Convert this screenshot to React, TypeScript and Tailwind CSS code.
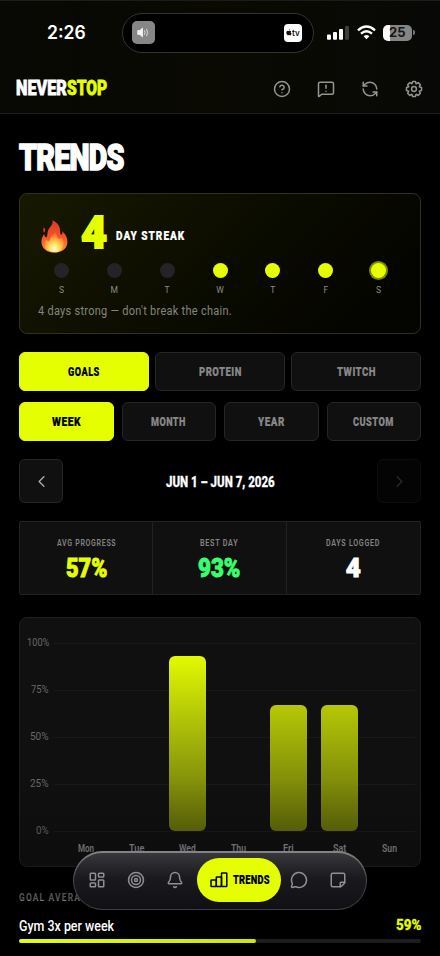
import React, { useLayoutEffect, useRef, useState } from 'react';
import {
  Bell,
  ChevronLeft,
  ChevronRight,
  CircleHelp,
  LayoutDashboard,
  MessageCircle,
  MessageSquareWarning,
  RefreshCcw,
  StickyNote,
  Target,
} from 'lucide-react';

interface FitProps {
  className: string;
  children: React.ReactNode;
}

// Condensed lettering: squeezes the text to the width of its box
const Fit: React.FC<FitProps> = ({ className, children }) => {
  const box = useRef<HTMLSpanElement>(null);
  const text = useRef<HTMLSpanElement>(null);
  const [scale, setScale] = useState<number>(1);

  useLayoutEffect(() => {
    if (box.current && text.current) {
      setScale(box.current.clientWidth / text.current.offsetWidth);
    }
  }, []);

  return (
    <span ref={box} className={`block shrink-0 whitespace-nowrap leading-none ${className}`}>
      <span ref={text} className="inline-block origin-left" style={{ transform: `scaleX(${scale})` }}>
        {children}
      </span>
    </span>
  );
};

const days = [
  { label: 'S', done: false },
  { label: 'M', done: false },
  { label: 'T', done: false },
  { label: 'W', done: true },
  { label: 'T', done: true },
  { label: 'F', done: true },
  { label: 'S', done: true, today: true },
];

const metrics = [
  { label: 'GOALS', width: 'w-[32px]', active: true },
  { label: 'PROTEIN', width: 'w-[43px]' },
  { label: 'TWITCH', width: 'w-[39px]' },
];

const ranges = [
  { label: 'WEEK', width: 'w-[29px]', active: true },
  { label: 'MONTH', width: 'w-[35px]' },
  { label: 'YEAR', width: 'w-[27px]' },
  { label: 'CUSTOM', width: 'w-[41px]' },
];

const stats = [
  { label: 'AVG PROGRESS', labelWidth: 'w-[59px]', value: '57%', valueWidth: 'w-[41px]', color: 'text-[#e6ff00]' },
  { label: 'BEST DAY', labelWidth: 'w-[38px]', value: '93%', valueWidth: 'w-[42px]', color: 'text-[#39ff6e]' },
  { label: 'DAYS LOGGED', labelWidth: 'w-[54px]', value: '4', valueWidth: 'w-[15px]', color: 'text-white' },
];

const bars = [
  { day: 'Mon', value: 0, width: 'w-[16px]' },
  { day: 'Tue', value: 0, width: 'w-[15px]' },
  { day: 'Wed', value: 93, width: 'w-[17px]' },
  { day: 'Thu', value: 0, width: 'w-[15px]' },
  { day: 'Fri', value: 67, width: 'w-[11px]' },
  { day: 'Sat', value: 67, width: 'w-[13px]' },
  { day: 'Sun', value: 0, width: 'w-[15px]' },
];

const ticks = [
  { label: '100%', width: 'w-[22px]' },
  { label: '75%', width: 'w-[18px]' },
  { label: '50%', width: 'w-[19px]' },
  { label: '25%', width: 'w-[19px]' },
  { label: '0%', width: 'w-[13px]' },
];

const StatusBar = () => (
  <div className="flex h-[65px] items-center pb-[2px]">
    <div className="w-[122px] pl-[47px]">
      <Fit className="w-[39px] font-['Inter'] text-[18px] font-semibold">2:26</Fit>
    </div>
    <div className="flex h-[40px] w-[192px] items-center justify-between rounded-full border border-[#333331] bg-black pr-[11px] pl-[9px]">
      <div className="flex size-[23px] items-center justify-center rounded-[5px] bg-[#868686]">
        <svg width="13" height="11" viewBox="0 0 13 11" fill="none">
          <path d="M0.8 3.600h2l2.600-2.400v8.600L2.800 7.400h-2z" fill="#f2f2f2" stroke="#f2f2f2" strokeLinejoin="round" />
          <path d="M7.600 3.700q1 1.800 0 3.600M9.700 2.200q2 3.300 0 6.600" stroke="#dcdcdc" strokeLinecap="round" />
        </svg>
      </div>
      <div className="flex size-[18px] items-center justify-center gap-[0.5px] rounded-[4px] bg-white">
        <svg width="6" height="7" viewBox="0 0 6 7" fill="#111">
          <path d="M4.100 0q.1 1-1 1.500Q3 .5 4.100 0ZM5.300 2.300q-1.300 1.200.3 2.200Q4.800 6.800 3.900 6.300q-.8-.4-1.600 0Q1.200 6.700.4 4.600-.2 1.800 1.900 1.700q1.200.4 1.900 0 1-.1 1.500.6Z" />
        </svg>
        <Fit className="w-[8px] font-['Inter'] text-[9px] font-semibold text-[#111]">tv</Fit>
      </div>
    </div>
    <div className="flex items-center pl-[13px]">
      <svg width="22" height="15" viewBox="0 0 22 15" fill="#fff">
        <rect x="0" y="9.500" width="4" height="5.200" rx="1" />
        <rect x="6" y="7" width="4" height="7.700" rx="1" />
        <rect x="12" y="4" width="4" height="10.700" rx="1" />
        <rect x="18" y="1" width="4" height="13.700" rx="1" fill="#3e3e3c" />
      </svg>
      <svg className="ml-[8px]" width="19" height="15" viewBox="0 0 19 15" fill="none" stroke="#fff" strokeWidth="2.400">
        <path d="M1 5.400Q9.500-2.300 18 5.400M4 8.700q5.500-4.800 11 0" />
        <path d="M9.500 14.200 6.600 11.200q2.900-2.300 5.800 0Z" fill="#fff" stroke="none" />
      </svg>
      <div className="ml-[7px] flex h-[16px] w-[29px] items-center justify-center rounded-[5px] bg-linear-to-r from-white from-25% to-[#858585] to-25%">
        <Fit className="w-[17px] font-['Inter'] text-[13px] font-bold text-[#161616]">25</Fit>
      </div>
      <div className="ml-px h-[5px] w-[1.500px] rounded-r-full bg-[#777]" />
    </div>
  </div>
);

const GearIcon = () => (
  <svg width="18" height="18" viewBox="0 0 24 24" fill="none" stroke="currentColor" strokeWidth="2" strokeLinejoin="round">
    <path d="M10.100 2h3.800l.9 3 2.800-1.500 2.900 2.900L19 9.200l3 .9v3.800l-3 .9 1.500 2.800-2.900 2.900-2.800-1.500-.9 3h-3.800l-.9-3-2.800 1.500-2.900-2.900L5 14.800l-3-.9v-3.800l3-.9-1.500-2.800 2.900-2.900L9.200 5z" />
    <circle cx="12" cy="12" r="3.200" />
  </svg>
);

const PodiumIcon = () => (
  <svg width="18" height="18" viewBox="0 0 18 18" fill="none" stroke="currentColor" strokeWidth="1.500" strokeLinejoin="round">
    <rect x="1" y="9" width="5.300" height="6.500" rx="0.600" />
    <rect x="6.300" y="6" width="5.200" height="9.500" rx="0.600" />
    <rect x="11.500" y="2" width="5.300" height="13.500" rx="0.600" />
  </svg>
);

const Flame = () => (
  <svg width="27" height="33" viewBox="0 0 27 33">
    <defs>
      <linearGradient id="outer" x1="0" y1="0" x2="0" y2="1">
        <stop offset="0" stopColor="#d93a22" />
        <stop offset="0.500" stopColor="#f4502b" />
        <stop offset="1" stopColor="#ff9a2c" />
      </linearGradient>
      <radialGradient id="inner" cx="0.500" cy="0.850" r="0.750">
        <stop offset="0" stopColor="#fffbd8" />
        <stop offset="0.350" stopColor="#ffdf5a" />
        <stop offset="0.700" stopColor="#ff9a35" />
        <stop offset="1" stopColor="#f4562b" />
      </radialGradient>
    </defs>
    <path
      fill="url(#outer)"
      d="M11.500 0.300C16.500 2.500 19.300 6.500 19.200 12c0 1.600.5 2.600 1.200 2.600 1 0 1.300-1.500.8-3.300 3.400 2.600 5.300 6.300 5.200 10.700C26.300 28.500 21 32.600 13.400 32.600 5.700 32.600.4 28.300.5 21.500c0-3.200 1.100-5.500 2.700-7.600.1 2 .8 3.200 1.800 3.400 1.500 0 1.200-2.600 1.600-5 .6-3.600 2.500-4.800 4-7.200 1-1.700 1.300-3.200.9-4.800Z"
    />
    <path
      fill="url(#inner)"
      d="M14.500 10.500c1.500 3.500 1 5.500 2.500 7.500 1.200 1.500 2.700.8 3.200-.6 2 1.800 3 4 2.500 7-.7 5-4.500 7.800-9.300 7.800S4.300 29.500 3.800 25c-.3-2.600.5-4.300 1.700-5.700.4 1.700 1.500 2.300 2.600 1.800 1.700-1 .6-3.300 2.500-5.500 1.700-1.800 3.500-2.600 3.900-5.100Z"
    />
    <path fill="#e63d20" d="M2.600 7.500c2 1.300 2 3.500.3 5.300-.8-1.900-.6-3.600-.3-5.300Z" />
  </svg>
);

interface PillProps {
  label: string;
  width: string;
  active?: boolean;
}

const Pill: React.FC<PillProps> = ({ label, width, active }) => (
  <button
    className={`flex h-[39px] flex-1 items-center justify-center rounded-[6px] border ${
      active ? 'border-[#e6ff00] bg-[#e6ff00] text-black' : 'border-[#262626] bg-[#101010] text-[#888]'
    }`}
  >
    <Fit className={`text-[13.500px] font-black tracking-wider [-webkit-text-stroke:0.2px] ${width}`}>{label}</Fit>
  </button>
);

const StreakCard = () => (
  <section className="mt-[20px] h-[141px] rounded-[8px] border border-[#303409] bg-linear-135 from-[#171900] to-[#030300] px-[18px]">
    <div className="flex h-[69px] items-end">
      <div className="w-[43px] pb-[10px] pl-[3px]">
        <Flame />
      </div>
      <Fit className="mb-[8px] w-[26px] text-[45px] font-black text-[#e6ff00] [-webkit-text-stroke:1.800px]">4</Fit>
      <Fit className="mb-[21px] ml-[9px] w-[69px] text-[13.500px] font-black tracking-widest [-webkit-text-stroke:0.2px]">
        DAY STREAK
      </Fit>
    </div>
    <div className="flex gap-[6px]">
      {days.map((day, i) => (
        <div key={i} className="flex flex-1 flex-col items-center gap-[7px]">
          <div
            className={`size-[15px] rounded-full ${day.done ? 'bg-[#e6ff00]' : 'bg-[#252326]'} ${
              day.today ? 'ring-2 ring-[#7c8a08]' : ''
            }`}
          />
          <span className="text-[8.500px] leading-[11px] text-[#8c8c86]">{day.label}</span>
        </div>
      ))}
    </div>
    <Fit className="mt-[9px] w-[194px] text-[12.500px] tracking-wide text-[#85857f]">
      4 days strong — don't break the chain.
    </Fit>
  </section>
);

const Chart = () => (
  <section className="mt-[22px] h-[250px] rounded-[8px] border border-[#202020] bg-[#101010] pt-[25px] pr-[5px]">
    <div className="grid">
      <div className="col-start-1 row-start-1 flex flex-col">
        {ticks.map((tick) => (
          <div key={tick.label} className="-mt-[6px] mb-[41px] flex h-[12px] items-center">
            <div className="flex w-[29px] justify-end text-[#686868]">
              <Fit className={`text-[10.500px] ${tick.width}`}>{tick.label}</Fit>
            </div>
            <div className="ml-[5px] h-px flex-1 bg-[#191919]" />
          </div>
        ))}
      </div>
      <div className="col-start-1 row-start-1 ml-[41px] flex">
        {bars.map((bar) => (
          <div key={bar.day} className="flex flex-1 flex-col items-center">
            <div className="flex h-[188px] items-end">
              <div
                className={`w-[37px] rounded-[6px] ${
                  bar.value > 80
                    ? 'bg-linear-to-b from-[#e2fa00] to-[#626b09]'
                    : 'bg-linear-to-b from-[#b6c805] to-[#626b09]'
                }`}
                style={{ height: `${bar.value}%` }}
              />
            </div>
            <Fit className={`mt-[12px] text-[11px] font-semibold text-[#858585] ${bar.width}`}>{bar.day}</Fit>
          </div>
        ))}
      </div>
    </div>
  </section>
);

const TabBar = () => (
  <nav className="absolute top-[851px] left-[73px] h-[59px] w-[294px] rounded-full bg-linear-to-b from-[#858588] via-[#4c4c50] to-[#3e3e42] p-px pt-[1.500px]">
    <div className="flex h-full items-center rounded-full bg-linear-to-b from-[#38383c] via-[#1a1a1e] via-45% to-[#101015] pb-[2px] text-[#909094]">
      <div className="flex w-[123px] items-center gap-[21px] pl-[14px]">
        <LayoutDashboard size={18} strokeLinejoin="miter" />
        <Target size={18} />
        <Bell size={18} />
      </div>
      <div className="flex h-[44px] w-[84px] items-center gap-[5px] rounded-full bg-[#e6ff00] pl-[13px] text-black">
        <PodiumIcon />
        <Fit className="w-[37px] text-[12.500px] font-black tracking-wide [-webkit-text-stroke:0.2px]">TRENDS</Fit>
      </div>
      <div className="flex items-center gap-[21px] pl-[9px]">
        <MessageCircle size={18} />
        <StickyNote size={18} className="-scale-y-100" />
      </div>
    </div>
  </nav>
);

export default function App() {
  return (
    <div className="relative h-[956px] w-[440px] overflow-hidden bg-black font-['Roboto',sans-serif] text-white">
      <header className="h-[114px] border-t border-b border-t-[#1c1c1a] border-b-[#1d1d1b] bg-linear-to-r from-[#080804] via-[#0a0a03] to-[#080806]">
        <StatusBar />
        <div className="flex h-[46px] items-center justify-between pb-px pr-[17px] pl-[16px]">
          <div className="flex text-[21px] font-black [-webkit-text-stroke:0.8px]">
            <Fit className="w-[51px]">NEVER</Fit>
            <Fit className="w-[40px] text-[#e6ff00]">STOP</Fit>
          </div>
          <div className="flex gap-[26px] text-[#949492]">
            <CircleHelp size={18} />
            <MessageSquareWarning size={18} />
            <RefreshCcw size={18} />
            <GearIcon />
          </div>
        </div>
      </header>

      <main className="px-[19px] pt-[25px]">
        <h1>
          <Fit className="h-[34px] w-[105px] text-[37px] font-black tracking-tight [-webkit-text-stroke:1.600px]">
            TRENDS
          </Fit>
        </h1>

        <StreakCard />

        <div className="mt-[18px] flex gap-[6px]">
          {metrics.map((item) => (
            <Pill key={item.label} {...item} />
          ))}
        </div>
        <div className="mt-[11px] flex gap-[8px]">
          {ranges.map((item) => (
            <Pill key={item.label} {...item} />
          ))}
        </div>

        {/* Period navigation */}
        <div className="mt-[18px] flex items-center justify-between">
          <button className="flex size-[44px] items-center justify-center rounded-[6px] border border-[#262626] bg-[#101010] text-[#aaa]">
            <ChevronLeft size={19} strokeWidth={1.8} />
          </button>
          <Fit className="mt-[3px] w-[109px] text-[15px] font-extrabold [-webkit-text-stroke:0.3px]">
            JUN 1 – JUN 7, 2026
          </Fit>
          <button className="flex size-[44px] items-center justify-center rounded-[6px] border border-[#0c0c0c] bg-[#040404] text-[#292929]">
            <ChevronRight size={19} strokeWidth={1.8} />
          </button>
        </div>

        <div className="mt-[18px] grid h-[74px] grid-cols-3 divide-x divide-[#222] rounded-[2px] border border-[#222] bg-[#101010]">
          {stats.map((stat) => (
            <div key={stat.label} className="flex flex-col items-center pt-[15.500px]">
              <Fit className={`text-[9.500px] font-semibold tracking-widest text-[#858585] ${stat.labelWidth}`}>
                {stat.label}
              </Fit>
              <Fit className={`mt-[8px] text-[26px] font-black [-webkit-text-stroke:0.9px] ${stat.color} ${stat.valueWidth}`}>
                {stat.value}
              </Fit>
            </div>
          ))}
        </div>

        <Chart />

        <h2 className="mt-[25px]">
          <Fit className="w-[81px] text-[11px] font-bold tracking-[0.14em] text-[#767676]">GOAL AVERAGES</Fit>
        </h2>
        <div className="mt-[15px] flex items-center justify-between">
          <Fit className="w-[95px] text-[14px] font-medium">Gym 3x per week</Fit>
          <Fit className="w-[25px] text-[15px] font-extrabold text-[#e6ff00] [-webkit-text-stroke:0.3px]">59%</Fit>
        </div>
        <div className="mt-[6px] h-[4px] rounded-full bg-[#1d1d1d]">
          <div className="h-full rounded-full bg-linear-to-r from-[#e6ff00] to-[#cfe600]" style={{ width: '59%' }} />
        </div>
      </main>

      {/* Fade behind the floating bar */}
      <div className="pointer-events-none absolute inset-x-0 top-[780px] h-[120px] bg-linear-to-b from-transparent to-black/30" />
      <TabBar />
    </div>
  );
}
